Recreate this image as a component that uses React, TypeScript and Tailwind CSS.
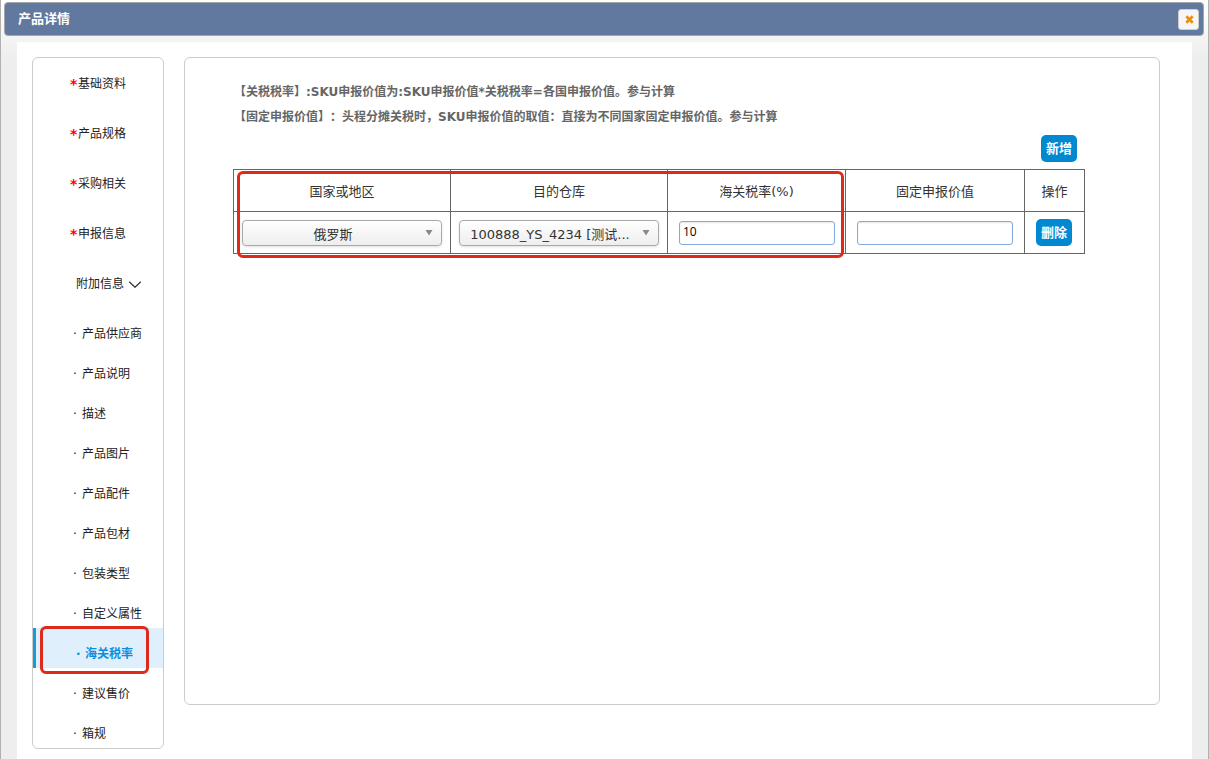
import React from "react";

const requiredSections = ["基础资料", "产品规格", "采购相关", "申报信息"];

const extraSections = [
  "产品供应商",
  "产品说明",
  "描述",
  "产品图片",
  "产品配件",
  "产品包材",
  "包装类型",
  "自定义属性",
  "海关税率",
  "建议售价",
  "箱规",
];

const activeSection = "海关税率";

function TitleBar() {
  return (
    <header className="mr-1 ml-[3px] flex h-[34px] items-center justify-between rounded border border-[#a6a6a6] bg-[#61799e] pr-1 pl-[13px]">
      <h1 className="text-[13px] leading-[34px] font-bold text-white">产品详情</h1>
      <button
        type="button"
        aria-label="关闭"
        className="flex h-[21px] w-[21px] items-center justify-center rounded-[3px] border border-[#ccc] bg-[#f6f6f6] pl-[2px]"
      >
        <svg width="9" height="9" viewBox="0 0 9 9" aria-hidden="true">
          <path d="M1.3 1.3L7.7 7.7M7.7 1.3L1.3 7.7" stroke="#ef8c08" strokeWidth="2.7" />
        </svg>
      </button>
    </header>
  );
}

function Sidebar() {
  return (
    <nav className="w-[132px] shrink-0 rounded-md border border-[#ccc] bg-white">
      <ul>
        {requiredSections.map((name) => (
          <li key={name}>
            <a href="#" className="flex h-[50px] items-center pt-[2px] pl-[37px]">
              <span className="w-2 text-sm leading-4 font-bold text-[#f00]">*</span>
              {name}
            </a>
          </li>
        ))}
        <li>
          <button type="button" className="flex h-[50px] w-full items-center pt-[2px] pl-[43px]">
            附加信息
            <svg className="ml-1" width="14" height="8" viewBox="0 0 14 8" aria-hidden="true">
              <path d="M1.2 1.7L7 7.3 12.8 1.7" fill="none" stroke="#333" strokeWidth="1.2" />
            </svg>
          </button>
        </li>
        {extraSections.map((name) =>
          name === activeSection ? (
            <li key={name} className="relative">
              <a
                href="#"
                aria-current="page"
                className="flex h-10 items-center border-l-[3px] border-[#1c9ad6] bg-[#e0effc] pt-3 pl-10 font-bold text-[#0c8ee0]"
              >
                <span className="w-[9px]">·</span>
                {name}
              </a>
              <span className="pointer-events-none absolute -top-[2px] left-[7px] h-12 w-[109px] rounded-md border-[3px] border-[#df2a1b]" />
            </li>
          ) : (
            <li key={name}>
              <a href="#" className="flex h-10 items-center pt-3 pl-10">
                <span className="w-[9px]">·</span>
                {name}
              </a>
            </li>
          ),
        )}
      </ul>
    </nav>
  );
}

function Dropdown({ label, value }: { label: string; value: string }) {
  return (
    <div className="relative w-[200px]">
      <select
        aria-label={label}
        className="h-[26px] w-full appearance-none rounded border border-[#aaa] bg-linear-to-b from-white via-[#f6f6f6] to-[#eee] pt-1 pr-[18px] text-center text-[13px] leading-5 text-[#333] shadow-sm"
      >
        <option>{value}</option>
      </select>
      <svg
        className="pointer-events-none absolute top-[10px] right-[9px]"
        width="8"
        height="6"
        viewBox="0 0 8 6"
        aria-hidden="true"
      >
        <path d="M0.5 0h7L4 5.5z" fill="#888" />
      </svg>
    </div>
  );
}

function NumberField({ label, value }: { label: string; value: string }) {
  return (
    <input
      type="text"
      aria-label={label}
      defaultValue={value}
      className="block h-6 w-[156px] rounded-[3px] border border-[#84acd8] bg-white px-[3px] pb-[2px] font-['Open_Sans',sans-serif] text-xs text-black shadow-[inset_0_1px_2px_rgba(0,0,0,0.1)]"
    />
  );
}

const actionButton =
  "h-[27px] w-9 rounded-[5px] bg-[#0088d0] text-[13px] font-bold text-white";

function TariffTable() {
  return (
    <div className="relative">
      <table className="w-full table-fixed border-collapse text-[13px] text-[#333]">
        <colgroup>
          <col className="w-[217px]" />
          <col className="w-[217px]" />
          <col className="w-[178px]" />
          <col />
          <col className="w-[60px]" />
        </colgroup>
        <thead>
          <tr className="h-[42px]">
            {["国家或地区", "目的仓库", "海关税率(%)", "固定申报价值", "操作"].map((title) => (
              <th key={title} scope="col" className="border border-[#666] p-0 pt-[2px] font-normal">
                {title}
              </th>
            ))}
          </tr>
        </thead>
        <tbody>
          <tr className="h-[42px]">
            <td className="border border-[#666] p-0 pl-2">
              <Dropdown label="国家或地区" value="俄罗斯" />
            </td>
            <td className="border border-[#666] p-0 pl-2">
              <Dropdown label="目的仓库" value="100888_YS_4234 [测试..." />
            </td>
            <td className="border border-[#666] p-0 pl-[11px]">
              <NumberField label="海关税率(%)" value="10" />
            </td>
            <td className="border border-[#666] p-0 pl-[11px]">
              <NumberField label="固定申报价值" value="" />
            </td>
            <td className="border border-[#666] p-0 pl-[11px]">
              <button type="button" className={actionButton}>
                删除
              </button>
            </td>
          </tr>
        </tbody>
      </table>
      <span className="pointer-events-none absolute top-[2px] left-1 h-[87px] w-[607px] rounded-md border-[3px] border-[#df2a1b]" />
    </div>
  );
}

export default function App() {
  return (
    <div className="min-h-screen border-x border-[#b0b0b0] bg-linear-to-b from-white from-0% via-[#eee] via-[60px] to-[#eee] pt-[2px] font-['DejaVu_Sans','Noto_Sans_CJK_SC',sans-serif] text-xs text-[#222]">
      <TitleBar />
      <div className="mx-4 mt-[6px] flex min-h-[calc(100vh-42px)] items-start gap-5 bg-white pt-[15px] pr-8 pb-[10px] pl-[15px]">
        <Sidebar />
        <main className="min-h-[648px] min-w-0 flex-1 rounded-md border border-[#ccc] bg-white pt-[22px] pr-[74px] pl-12">
          <div className="pl-px leading-[25px] font-bold text-[#666] [text-spacing-trim:space-all]">
            <p>【关税税率】:SKU申报价值为:SKU申报价值*关税税率=各国申报价值。参与计算</p>
            <p>【固定申报价值】：头程分摊关税时，SKU申报价值的取值：直接为不同国家固定申报价值。参与计算</p>
          </div>
          <div className="mt-[5px] mb-[7px] flex justify-end pr-2">
            <button type="button" className={actionButton}>
              新增
            </button>
          </div>
          <TariffTable />
        </main>
      </div>
    </div>
  );
}
